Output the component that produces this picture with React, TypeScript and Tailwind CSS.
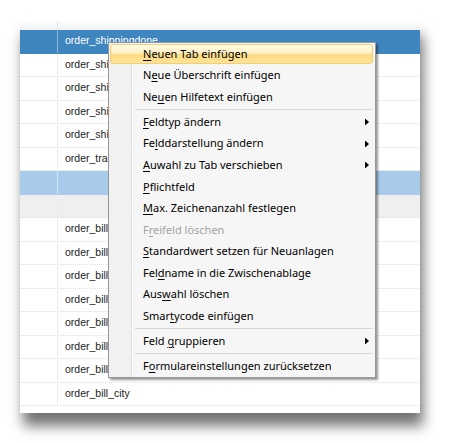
import React from 'react';

type Row = { name: string; tone?: 'sel' | 'light' | 'gray' };

const rows: Row[] = [
  { name: 'order_shippingdone', tone: 'sel' },
  { name: 'order_ship_company' },
  { name: 'order_ship_firstname' },
  { name: 'order_ship_lastname' },
  { name: 'order_ship_street' },
  { name: 'order_tracking' },
  { name: '', tone: 'light' },
  { name: '', tone: 'gray' },
  { name: 'order_bill_company' },
  { name: 'order_bill_salutation' },
  { name: 'order_bill_firstname' },
  { name: 'order_bill_lastname' },
  { name: 'order_bill_street' },
  { name: 'order_bill_number' },
  { name: 'order_bill_zip' },
  { name: 'order_bill_city' },
];

type Item = { pre: string; key: string; post: string; sub?: boolean; off?: boolean; hot?: boolean } | 'sep';

const items: Item[] = [
  { pre: '', key: 'N', post: 'euen Tab einfügen', hot: true },
  { pre: 'N', key: 'e', post: 'ue Überschrift einfügen' },
  { pre: 'Ne', key: 'u', post: 'en Hilfetext einfügen' },
  'sep',
  { pre: '', key: 'F', post: 'eldtyp ändern', sub: true },
  { pre: 'Fe', key: 'l', post: 'ddarstellung ändern', sub: true },
  { pre: '', key: 'A', post: 'uwahl zu Tab verschieben', sub: true },
  { pre: '', key: 'P', post: 'flichtfeld' },
  { pre: '', key: 'M', post: 'ax. Zeichenanzahl festlegen' },
  { pre: 'F', key: 'r', post: 'eifeld löschen', off: true },
  { pre: '', key: 'S', post: 'tandardwert setzen für Neuanlagen' },
  { pre: 'Fel', key: 'd', post: 'name in die Zwischenablage' },
  { pre: 'Aus', key: 'w', post: 'ahl löschen' },
  { pre: 'Smar', key: 't', post: 'ycode einfügen' },
  'sep',
  { pre: 'Feld ', key: 'g', post: 'ruppieren', sub: true },
  'sep',
  { pre: 'F', key: 'o', post: 'rmulareinstellungen zurücksetzen' },
];

function ContextMenu() {
  return (
    <div className="absolute left-[88px] top-[20px] w-[268px] border border-[#979797] bg-[#f6f6f6] shadow-[2px_2px_2px_rgba(0,0,0,0.4)] font-['Noto_Sans',sans-serif] text-[11px] text-black">
      {/* gutter */}
      <div className="absolute left-0 top-0 bottom-0 w-[23px] bg-[#f1f1f1] border-r border-[#e2e3e3]">
        <div className="absolute right-[-2px] top-0 bottom-0 w-px bg-white" />
      </div>
      {items.map((it, i) =>
        it === 'sep' ? (
          <div key={i} className="relative h-[3.4px] flex items-center pl-[26px] pr-[2px]">
            <div className="w-full h-px bg-[#d7d7d7]" />
          </div>
        ) : (
          <div key={i} className="relative h-[21.6px] flex items-center pl-[34px]">
            {it.hot && (
              <div className="absolute left-[1px] right-[2px] top-[1px] bottom-[1px] rounded-[3px] border border-[#f0cf76] bg-[linear-gradient(to_bottom,#fffbe6_0%,#fdf0c2_45%,#fcdb80_55%,#fde39a_100%)]" />
            )}
            <span className={`relative whitespace-nowrap ${it.off ? 'text-[#a3a3a3]' : ''}`}>
              {it.pre}
              <span className="underline underline-offset-[2px]">{it.key}</span>
              {it.post}
            </span>
            {it.sub && (
              <svg className="absolute right-[6px] top-1/2 -translate-y-1/2" width="4" height="7" viewBox="0 0 4 7">
                <path d="M0 0L4 3.5L0 7Z" fill="#000" />
              </svg>
            )}
          </div>
        )
      )}
    </div>
  );
}

export default function App() {
  return (
    <div className="min-h-[443px] w-[452px] bg-white pt-[22px] pl-[20px]">
      <div className="relative w-[400px] bg-white rounded-tr-[3px] shadow-[3px_13px_13px_rgba(0,0,0,0.55)] font-['Liberation_Sans',Arial,sans-serif] text-[10.5px] text-[#222]">
        {/* top strip */}
        <div className="flex h-[8px] bg-[linear-gradient(to_bottom,#fbfbfb,#f1f1f1)]">
          <div className="w-[38px] border-r border-[#e4e4e4]" />
        </div>
        {rows.map((r, i) => (
          <div
            key={i}
            className={`flex h-[23.5px] border-b border-dotted ${
              r.tone === 'sel'
                ? 'bg-[#3f86bf] text-white border-[#3f86bf]'
                : r.tone === 'light'
                ? 'bg-[#a8caeb] border-[#a8caeb]'
                : r.tone === 'gray'
                ? 'bg-[#efefef] border-[#e2e2e2]'
                : 'border-[#dedede]'
            }`}
          >
            <div className={`w-[38px] shrink-0 border-r ${r.tone === 'sel' ? 'border-[#8db5d9]' : r.tone === 'light' ? 'border-[#d3e4f4]' : 'border-[#ececec]'}`} />
            <div className="flex items-center pl-[7px] whitespace-nowrap">{r.name}</div>
          </div>
        ))}
        <div className="h-[7px]" />
        <ContextMenu />
      </div>
    </div>
  );
}
